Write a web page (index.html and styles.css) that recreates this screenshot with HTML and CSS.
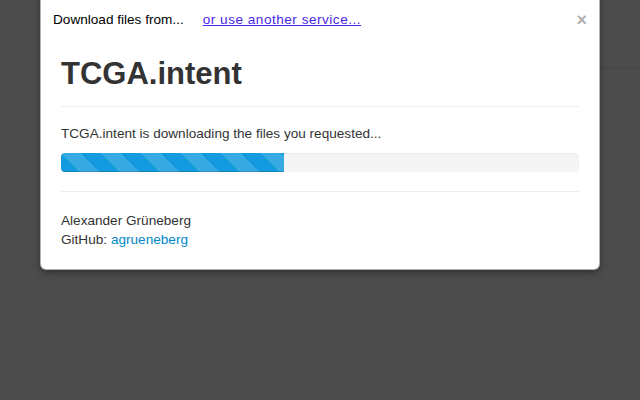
FILE: index.html
```html
<!DOCTYPE html>
<html>
<head>
<meta charset="utf-8">
<link rel="stylesheet" href="styles.css">
</head>
<body>
<div class="page">
  <div class="page-bar"></div>
</div>
<div class="modal">
  <div class="modal-header">
    <span class="from">Download files from...</span>
    <a class="service" href="#">or use another service...</a>
    <span class="close">×</span>
  </div>
  <div class="modal-body">
    <h1 class="title">TCGA.intent</h1>
    <hr class="rule rule-top">
    <p class="status">TCGA.intent is downloading the files you requested...</p>
    <div class="progress"><div class="bar" style="width: 43%"></div></div>
    <hr class="rule rule-bottom">
    <p class="author">Alexander Grüneberg<br>GitHub: <a class="gh" href="#">agrueneberg</a></p>
  </div>
</div>
</body>
</html>
```
FILE: styles.css
```css
html, body {
  margin: 0;
  padding: 0;
  height: 100%;
}
body {
  background: #4c4c4c;
  font-family: "Liberation Sans", Arial, sans-serif;
  font-size: 13.6px;
  color: #333;
  overflow: hidden;
}
.page {
  display: flex;
  justify-content: flex-end;
}
.page-bar {
  width: 340px;
  height: 67px;
  border-bottom: 1px solid #444;
}
.modal {
  position: absolute;
  left: 40px;
  top: -6px;
  width: 558px;
  background: #fff;
  border: 1px solid rgba(0,0,0,0.3);
  border-radius: 6px;
  box-shadow: 0 3px 7px rgba(0,0,0,0.35);
}
.modal-header {
  display: flex;
  align-items: center;
  padding: 15px 12px 0 12px;
  line-height: 20px;
  color: #000;
}
.service {
  margin-left: 19px;
  color: #4a25e8;
  text-decoration: underline;
  letter-spacing: 0.5px;
}
.close {
  margin-left: auto;
  font-size: 18px;
  font-weight: bold;
  color: #b0b0b0;
  line-height: 20px;
}
.modal-body {
  padding: 24px 20px 20px 20px;
}
.title {
  margin: 0;
  font-size: 31px;
  line-height: 40px;
  font-weight: bold;
  color: #333;
}
.rule {
  border: 0;
  border-top: 1px solid #eee;
  border-bottom: 1px solid #fff;
}
.rule-top {
  margin: 12px 0 16px 0;
}
.rule-bottom {
  margin: 19px 0 18px 0;
}
.status {
  margin: 0 0 9px 0;
  line-height: 20px;
}
.progress {
  height: 19px;
  background: #f5f5f5;
  border-radius: 4px;
  overflow: hidden;
  box-shadow: inset 0 1px 2px rgba(0,0,0,0.06);
}
.bar {
  height: 100%;
  background-color: #149bdf;
  background-image: linear-gradient(45deg, rgba(255,255,255,0.15) 25%, transparent 25%, transparent 50%, rgba(255,255,255,0.15) 50%, rgba(255,255,255,0.15) 75%, transparent 75%, transparent);
  background-size: 40px 40px;
  box-shadow: inset 0 -1px 0 rgba(0,0,0,0.15);
}
.author {
  margin: 0;
  line-height: 19px;
}
.gh {
  color: #0088cc;
  text-decoration: none;
}
```
